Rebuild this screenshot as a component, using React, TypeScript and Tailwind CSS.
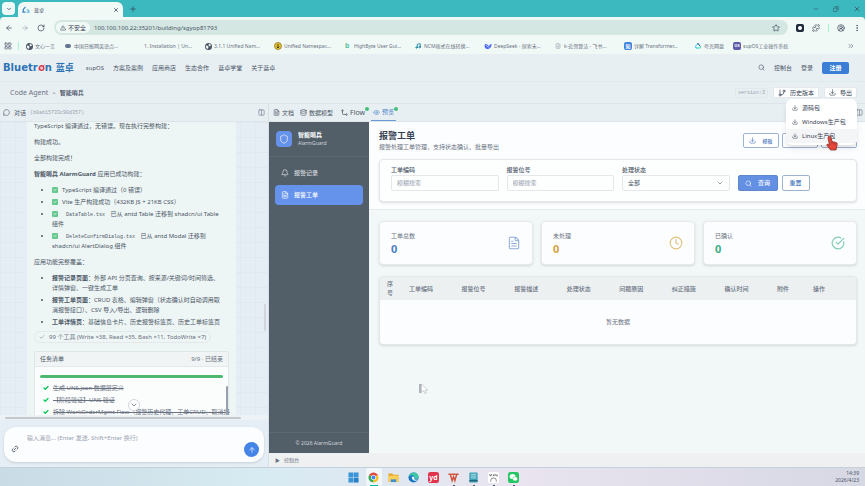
import React from 'react';
import {
  ArrowLeft, ArrowRight, ArrowUp, Bell, Check, ChevronDown, ChevronsRight, CircleCheckBig, CircleUserRound, Clock,
  Columns2, Copy, Database, Download, EllipsisVertical, Eye, FileText, GitBranch, LayoutGrid, Link2,
  MessageCircle, Minus, Music, Plus, Puzzle, RotateCw, Search, Shield, Star, TriangleAlert, X,
} from 'lucide-react';

function GlobeIcon() {
  return (
    <svg className="size-[7px]" viewBox="0 0 14 14">
      <circle cx="7" cy="7" r="7" fill="#4b5563" />
      <path d="M2 5l4 1 1 3-2 3C3 11 1 8 2 5zM8 1l4 3-2 3-3-2z" fill="#f1f9f7" />
    </svg>
  );
}

const bookmarks = [
  { text: '文心一言', icon: <GlobeIcon />, width: 'w-[39px]' },
  { text: '中国日报网英语点...', icon: <span className="h-1 w-1.5 rounded-sm bg-slate-500" />, width: 'w-[70px]' },
  { text: '1. Installation | Un...', icon: <span className="size-1.5" />, width: 'w-[70px]' },
  { text: '3.1.1 Unified Nam...', icon: <GlobeIcon />, width: 'w-[70px]' },
  {
    text: 'Unified Namespac...',
    icon: (
      <svg className="size-2" viewBox="0 0 16 16">
        <circle cx="8" cy="8" r="7" fill="#e8c230" stroke="#8a7420" strokeWidth="1.500" />
        <path d="M8 4v8M5.500 9.500L8 12l2.500-2.500" fill="none" stroke="#4a4020" strokeWidth="2" />
      </svg>
    ),
    width: 'w-[70px]',
  },
  { text: 'HighByte User Gui...', icon: <b className="w-1.5 text-[7px] text-[#5cc3a0]">b</b>, width: 'w-[70px]' },
  { text: 'NCM格式在线转换...', icon: <Music className="size-1.5 text-cyan-700" strokeWidth={3} />, width: 'w-[70px]' },
  {
    text: 'DeepSeek - 探索未...',
    icon: (
      <svg className="size-2" viewBox="0 0 16 16" fill="none">
        <path d="M2 5c2-2 6 0 8 4 1-1 0-3 2-4s2 1 3-2c1 6-3 11-8 11S0 9 2 5z" fill="#4d6bfe" />
        <path d="M4 7c2 0 3 2 5 4" stroke="#fff" strokeWidth="1.4" />
      </svg>
    ),
    width: 'w-[70px]',
  },
  { text: 'k-近邻算法 - 飞书...', icon: <FileText className="size-1.5 text-gray-400" />, width: 'w-[70px]' },
  { text: '详解 Transformer...', icon: <b className="size-2 rounded-xs bg-[#3f82dc] text-center text-white">知</b>, width: 'w-[70px]' },
  {
    text: '夸克网盘',
    icon: (
      <svg className="size-1.5" viewBox="0 0 12 12" fill="none" strokeWidth="2" strokeLinecap="round">
        <path d="M3 10a2.500 2.500 0 0 1 0-5l3-4" stroke="#38bdf8" />
        <path d="M6 1l4 5" stroke="#1e3a8a" />
        <path d="M10 6a2 2 0 0 1-1 4H3" stroke="#2dd4bf" />
      </svg>
    ),
    width: 'w-[39px]',
  },
  { text: 'supOS工业操作系统', icon: <b className="size-2 rounded-xs bg-[#5a58a8] text-center text-[4px] text-white">OS</b>, width: 'w-[70px]' },
];

const navItems = ['supOS', '方案及案例', '应用商店', '生态合作', '蓝卓学堂', '关于蓝卓'];

const tasks = [
  '生成 UNS.json 数据层定义',
  '【阶段验证】UNS 验证',
  '拆除 WorkOrderMgmt Flow（报警历史代理、工单CRUD、取消报',
];

const stats = [
  { label: '工单总数', color: 'text-[#4a80c4]', icon: <FileText className="size-3.5 text-[#8dabd8]" strokeWidth={1.8} /> },
  { label: '未处理', color: 'text-[#d6a140]', icon: <Clock className="size-3.5 text-[#e2c27c]" strokeWidth={2} /> },
  { label: '已确认', color: 'text-[#3dac86]', icon: <CircleCheckBig className="size-3.5 text-[#7fcdb0]" strokeWidth={2} /> },
];

const columns = ['工单编码', '报警位号', '报警描述', '处理状态', '问题原因', '纠正措施', '确认时间', '附件', '操作'];

function BrowserBar() {
  return (
    <div className="shrink-0 bg-[#3bb9be] text-gray-700">
      <div className="flex h-[17px] items-end pl-0.5 pr-1">
        <button aria-label="搜索标签页" className="mb-0.5 flex size-[13px] items-center justify-center rounded bg-[#eefaf7]">
          <ChevronDown className="size-1.5" strokeWidth={3} />
        </button>
        <div className="ml-[3px] flex h-[15px] w-[105px] items-center gap-1 rounded-t-md bg-[#f1f9f7] px-1 text-[5px]">
          <svg className="size-2" viewBox="0 0 16 16" fill="none" strokeWidth="2.500">
            <path d="M7 2C4 4 2 7 2 12h5" stroke="#3b82c4" />
            <path d="M9 12h5c0-4-2-5-5-4" stroke="#67b7dc" />
          </svg>
          <span>蓝卓</span>
          <button aria-label="关闭标签页" className="ml-auto"><X className="size-1.5" strokeWidth={3} /></button>
        </div>
        <button aria-label="新建标签页" className="mb-1 ml-1.5"><Plus className="size-2" /></button>
        <div className="mb-1 ml-auto flex items-center gap-3.5">
          <button aria-label="最小化"><Minus className="size-1.5" /></button>
          <button aria-label="还原"><Copy className="size-1.5 -scale-x-100" /></button>
          <button aria-label="关闭"><X className="size-2" /></button>
        </div>
      </div>

      <div className="flex h-[21px] items-center rounded-t bg-[#f1f9f7] pl-[5px] pr-1">
        <div className="flex w-[49px] items-center gap-2">
          <button aria-label="后退"><ArrowLeft className="size-2" /></button>
          <button aria-label="前进"><ArrowRight className="size-2 text-gray-400" /></button>
          <button aria-label="刷新"><RotateCw className="size-2" /></button>
        </div>
        <div className="flex h-[15px] flex-1 items-center rounded-full bg-[#d4e7e3] pl-0.5 pr-2">
          <span className="flex h-[11px] items-center gap-0.5 rounded-full bg-[#f1f9f7] px-1 text-[6px]">
            <TriangleAlert className="size-1.5" />不安全
          </span>
          <input aria-label="地址" className="ml-1 min-w-0 flex-1 text-[6px] text-gray-600 outline-none" defaultValue="100.100.100.22:35201/building/sgyop81793" />
          <Star className="size-2" />
        </div>
        <div className="ml-2 flex items-center gap-2">
          <span className="flex size-2 items-center justify-center rounded-xs bg-gray-800"><span className="size-1 rounded-full bg-white" /></span>
          <Puzzle className="size-2" />
          <span className="h-2 w-px bg-emerald-200" />
          <CircleUserRound className="size-2" />
          <EllipsisVertical className="size-2" />
        </div>
      </div>

      <div className="flex h-[16px] items-center bg-[#f1f9f7] pl-1 pr-2.5 text-[5px] text-gray-500">
        <LayoutGrid className="size-2" strokeWidth={2.5} />
        <span className="ml-1.5 mr-1.5 h-2 w-px bg-emerald-200" />
        {bookmarks.map((item) => (
          <a key={item.text} href="#" className={`flex items-center gap-0.5 whitespace-nowrap leading-2 ${item.width}`}>
            <span className="flex w-2 shrink-0 justify-center">{item.icon}</span>
            {item.text}
          </a>
        ))}
        <ChevronsRight className="ml-auto size-2" />
      </div>
    </div>
  );
}

function SiteHeader() {
  return (
    <header className="flex h-[28px] shrink-0 items-center border-b border-[#e0e9ee] pl-[3px] pr-4 text-gray-600">
      <a href="#" className="flex items-center font-['DejaVu_Sans','Noto_Sans_CJK_SC',sans-serif] text-[10px] font-bold leading-3 text-[#2e74b5]">
        <span>Bluetr</span>
        <svg className="size-[7px]" viewBox="0 0 14 14" fill="none">
          <circle cx="7" cy="8" r="4.500" stroke="#d83b4a" strokeWidth="3" />
          <path d="M1 12L13 2" stroke="#d83b4a" strokeWidth="2" />
          <path d="M5 9l4-3" stroke="#f1f5f9" strokeWidth="1.500" />
        </svg>
        <span>n</span>
        <span className="ml-1 text-[9px]">蓝卓</span>
      </a>
      <nav className="ml-3 flex gap-[9px]">
        {navItems.map((item) => <a key={item} href="#">{item}</a>)}
      </nav>
      <div className="ml-auto flex items-center gap-[9px]">
        <button aria-label="搜索"><Search className="size-[7px]" /></button>
        <a href="#">控制台</a>
        <a href="#">登录</a>
        <button className="h-3 w-[27px] rounded-xs bg-[#3a7fd5] font-bold text-white">注册</button>
      </div>
    </header>
  );
}

function Breadcrumb() {
  return (
    <div className="flex h-[22px] shrink-0 items-center border-b border-[#dde5ea] pl-[10px] pr-2">
      <a href="#" className="text-[7px] text-gray-500">Code Agent</a>
      <span className="mx-1 text-gray-500">&gt;</span>
      <span className="font-medium text-gray-700">智能哨兵</span>
      <div className="ml-auto flex items-center gap-[5px] text-gray-700">
        <span className="rounded-xs border border-[#e0e8ea] px-0.5 font-['Liberation_Mono',monospace] text-[5px] text-gray-400">version:3</span>
        <button className="flex h-[11px] items-center gap-1 rounded-xs border border-gray-200 bg-white px-1">
          <GitBranch className="size-2" />历史版本
        </button>
        <div className="relative">
          <button className="flex h-[11px] items-center gap-1 rounded-xs border border-gray-200 bg-white px-1">
            <Download className="size-[7px]" />导出
          </button>
          <div className="absolute right-0 top-3 z-20 w-[71px] rounded-md bg-white py-0.5 shadow-md">
            {['源码包', 'Windows生产包', 'Linux生产包'].map((name) => (
              <button key={name} className="flex h-3.5 w-full items-center gap-1 whitespace-nowrap rounded-xs px-1.5 nth-3:bg-[#f4f5f6]">
                <Download className="size-1.5" />{name}
              </button>
            ))}
            <svg className="absolute left-10 top-9 h-[17px] w-3" viewBox="0 0 24 32">
              <path d="M5 2c2-1 4 0 5 2l2 8 8 2c3 1 3 3 2 6l-2 9H9L2 20c-1-3 2-4 4-2l1 1L4 5z" fill="#e5463a" stroke="#7f2d28" strokeWidth="1.500" />
              <path d="M12 13v4M16 14v4M19 15v4" stroke="#8f2d28" />
            </svg>
          </div>
        </div>
      </div>
    </div>
  );
}

function Done() {
  return (
    <span className="mr-1 inline-flex size-1.5 items-center justify-center rounded-[1px] bg-[#63c98d] align-middle">
      <Check className="size-1 text-white" strokeWidth={4} />
    </span>
  );
}

function ChatPanel() {
  return (
    <section className="flex w-[269px] shrink-0 flex-col border-r border-[#d5dfe6]">
      <div className="flex h-[18px] shrink-0 items-center gap-1 border-b border-[#dde5ea] px-[3px] text-gray-600">
        <MessageCircle className="size-[7px]" />
        <span>对话</span>
        <span className="font-['Liberation_Mono',monospace] text-[5px] text-gray-400">(b0ab15733c90d357)</span>
        <button aria-label="折叠面板" className="ml-auto"><Columns2 className="size-[7px] text-gray-500" /></button>
      </div>

      <div className="relative min-h-0 flex-1 overflow-hidden bg-[#e5edf5] bg-[linear-gradient(#e0e8f1_1px,transparent_1px),linear-gradient(90deg,#e0e8f1_1px,transparent_1px)] bg-[size:15px_15px] pl-[27px] pr-8">
        <div className="-mt-px bg-[#eef5f5] px-[7px] leading-[10px] text-gray-600">
          <div className="space-y-1.5">
            <p className="whitespace-nowrap">TypeScript 编译通过，无错误。现在执行完整构建：</p>
            <p>构建成功。</p>
            <p>全部构建完成！</p>
            <p><b>智能哨兵 AlarmGuard</b> 应用已成功构建：</p>
            <ul className="list-disc space-y-0.5 pl-[18px]">
              <li><Done />TypeScript 编译通过（0 错误）</li>
              <li><Done />Vite 生产构建成功（432KB JS + 21KB CSS）</li>
              <li><Done /><code className="mx-1 font-['Liberation_Mono',monospace] text-[5px] leading-none">DataTable.tsx</code> 已从 antd Table 迁移到 shadcn/ui Table<br />组件</li>
              <li><Done /><code className="mx-1 font-['Liberation_Mono',monospace] text-[5px] leading-none">DeleteConfirmDialog.tsx</code> 已从 antd Modal 迁移到<br />shadcn/ui AlertDialog 组件</li>
            </ul>
            <p>应用功能完整覆盖：</p>
            <ul className="list-disc space-y-0.5 pl-[18px]">
              <li><b>报警记录页面</b>：外部 API 分页查询、按来源/关键词/时间筛选、<br />详情弹窗、一键生成工单</li>
              <li><b>报警工单页面</b>：CRUD 表格、编辑弹窗（状态确认时自动调用取<br />消报警接口）、CSV 导入/导出、逻辑删除</li>
              <li><b>工单详情页</b>：基础信息卡片、历史报警标签页、历史工单标签页</li>
            </ul>
          </div>
          <button className="mt-1 flex h-3 items-center gap-1 whitespace-nowrap rounded-full border border-gray-200 px-1 text-gray-500">
            <Check className="size-1.5" />99 个工具 (Write ×38, Read ×35, Bash ×11, TodoWrite ×7)
          </button>
          <div className="mt-2 rounded-xs border border-[#dfe6e8] bg-[#fbfdfd]">
            <div className="flex h-[15px] items-center justify-between border-b border-[#e3e9ea] bg-[#f0f4f4] px-[5px]">
              <span>任务清单</span>
              <span className="text-gray-500">9/9 · 已结束</span>
            </div>
            <div className="mx-[5px] mt-2 h-[3px] rounded-full bg-[#4cb870]" />
            <div className="flex pl-2 pt-1">
              <ul className="min-w-0 flex-1 text-gray-500">
                {tasks.map((task) => (
                  <li key={task} className="flex h-3 items-center gap-1 whitespace-nowrap">
                    <Check className="size-1.5 shrink-0 text-green-500" strokeWidth={5} />
                    <s>{task}</s>
                  </li>
                ))}
              </ul>
              <span className="mt-1 w-0.5 rounded-full bg-gray-400" />
            </div>
          </div>
        </div>
        <span className="absolute bottom-[84px] right-0.5 h-[27px] w-0.5 rounded-full bg-gray-300" />
        <button aria-label="滚动到底部" className="absolute bottom-1 left-32 flex size-3 items-center justify-center rounded-full border border-gray-300 bg-white">
          <ChevronDown className="size-2 text-gray-600" />
        </button>
      </div>

      <div className="flex h-[5px] items-center bg-[#edf2f5] pl-[5px] pr-[27px]">
        <span className="h-0.5 flex-1 rounded-full bg-[#c3c8cb]" />
      </div>

      <div className="bg-[#e5edf5] px-1 pb-[5px] pt-[7px]">
        <div className="flex h-[35px] items-end rounded-xl bg-[#fcfdfe] px-[5px] pb-[5px] shadow-sm">
          <button aria-label="添加链接" className="mb-1 ml-0.5"><Link2 className="size-2 -rotate-45 text-gray-700" /></button>
          <textarea aria-label="消息" placeholder="输入消息... (Enter 发送, Shift+Enter 换行)" className="h-[24px] min-w-0 flex-1 resize-none pl-2 leading-[10px] outline-none placeholder:text-gray-400" />
          <button aria-label="发送" className="flex size-[15px] items-center justify-center rounded-full bg-[#4484e6] text-white">
            <ArrowUp className="size-2" />
          </button>
        </div>
      </div>
    </section>
  );
}

function WorkTabs() {
  return (
    <div className="flex h-[18px] shrink-0 items-stretch border-b border-[#dde5ea] pl-1 pr-0.5 text-gray-600">
      <button className="flex items-center gap-0.5"><FileText className="size-[7px]" />文档</button>
      <button className="ml-1.5 flex items-center gap-0.5"><Database className="size-[7px]" />数据模型</button>
      <button className="relative ml-2 flex items-center gap-0.5 pr-0.5">
        <svg className="size-[7px]" viewBox="0 0 14 14" fill="none" stroke="currentColor" strokeWidth="1.500">
          <path d="M3 4v5q0 2 2 2h4" /><circle cx="3" cy="3" r="1.500" /><circle cx="11" cy="11" r="1.500" />
        </svg>
        <span className="text-[7px]">Flow</span>
        <span className="absolute -right-0.5 top-[3px] size-1 rounded-full bg-[#43c07a]" />
      </button>
      <button className="relative ml-1 flex items-center gap-0.5 border-b border-[#6a9ad6] px-0.5 text-[#4f84c8]">
        <Eye className="size-[7px]" />预览
        <span className="absolute -right-0.5 top-[3px] size-1 rounded-full bg-[#43c07a]" />
      </button>
      <button aria-label="展开面板" className="ml-auto"><Columns2 className="size-[7px] text-gray-500" /></button>
    </div>
  );
}

function Sidebar() {
  return (
    <aside className="flex w-[100px] shrink-0 flex-col bg-[#525e68] text-gray-200">
      <div className="flex h-[35px] items-center gap-1.5 border-b border-[#5d6871] px-[7px]">
        <span className="flex size-4 items-center justify-center rounded bg-[#6593ec]"><Shield className="size-2.5" /></span>
        <div>
          <p className="text-[6px] font-bold leading-2 text-white">智能哨兵</p>
          <p className="text-[5px] leading-2 text-gray-300">AlarmGuard</p>
        </div>
      </div>
      <nav className="flex flex-1 flex-col gap-0.5 p-1.5">
        <a href="#" className="flex h-5 items-center gap-[5px] rounded px-1.5"><Bell className="size-2" />报警记录</a>
        <a href="#" className="flex h-5 items-center gap-[5px] rounded bg-[#6593ec] px-1.5 font-medium text-white"><FileText className="size-2" />报警工单</a>
      </nav>
      <footer className="flex h-[21px] items-center justify-center border-t border-[#5d6871] text-[5px] text-gray-300">© 2026 AlarmGuard</footer>
    </aside>
  );
}

function WorkOrders() {
  return (
    <main className="relative min-w-0 flex-1 bg-[#f2f7f8] text-gray-600">
      <div className="border-b border-[#e8eced] bg-[#fcfdfe] py-[7px] pl-[10px] pr-2">
        <div className="flex items-center justify-between">
          <div>
            <h1 className="text-[9px] font-bold leading-[13px] text-gray-700">报警工单</h1>
            <p className="leading-[10px] text-gray-500">报警处理工单管理，支持状态确认、批量导出</p>
          </div>
          <div className="flex gap-[3px]">
            {['模板', '导入', '导出'].map((name) => (
              <button key={name} className="flex h-[15px] w-9 items-center justify-center gap-1.5 rounded-xs border border-[#9db4cf] bg-white text-[5px] font-medium text-[#4a78c0]">
                <Download className="size-[7px]" />{name}
              </button>
            ))}
          </div>
        </div>
        <form className="mt-[7px] grid grid-cols-4 items-end gap-2 rounded-sm border border-[#e3e7ea] bg-[#fdfefe] px-[11px] pb-[10px] pt-1.5 shadow-sm">
          <label className="font-medium leading-[9px]">
            工单编码
            <input placeholder="模糊搜索" className="block h-4 w-full rounded-xs border border-gray-200 px-[5px] font-normal outline-none placeholder:text-gray-400" />
          </label>
          <label className="font-medium leading-[9px]">
            报警位号
            <input placeholder="模糊搜索" className="block h-4 w-full rounded-xs border border-gray-200 px-[5px] font-normal outline-none placeholder:text-gray-400" />
          </label>
          <label className="font-medium leading-[9px]">
            处理状态
            <span className="relative block">
              <select className="block h-4 w-full appearance-none rounded-xs border border-gray-200 px-[5px] font-normal"><option>全部</option></select>
              <ChevronDown className="pointer-events-none absolute right-1.5 top-1 size-2 text-gray-500" />
            </span>
          </label>
          <div className="flex gap-1">
            <button type="button" className="flex h-4 w-10 items-center justify-center gap-1.5 rounded-xs border border-[#5f88c8] bg-[#6490e4] font-medium text-white">
              <Search className="size-[7px]" />查询
            </button>
            <button type="button" className="h-4 w-7 rounded-xs border border-[#9db4cf] bg-white font-medium text-[#4a78c0]">重置</button>
          </div>
        </form>
      </div>

      <div className="space-y-[11px] py-[11px] pl-[10px] pr-2">
        <div className="grid grid-cols-3 gap-2">
          {stats.map((item) => (
            <div key={item.label} className="flex h-11 items-center justify-between rounded-sm border border-[#e6eaec] bg-[#fcfdfe] px-[11px] shadow-sm">
              <div>
                <p className="leading-[10px] text-gray-500">{item.label}</p>
                <p className={`pt-0.5 text-[11px] font-bold leading-3 ${item.color}`}>0</p>
              </div>
              {item.icon}
            </div>
          ))}
        </div>
        <div className="overflow-hidden rounded-sm border border-[#e2e7e9] bg-[#fcfdfe] shadow-sm">
          <table className="w-full table-fixed text-left">
            <thead className="bg-[#ecf0f1] text-gray-500">
              <tr className="h-[23px]">
                <th className="w-[22px] px-[7px] font-medium leading-[9px]">序号</th>
                {columns.map((name) => (
                  <th key={name} className={`whitespace-nowrap px-[7px] font-medium ${name === '附件' ? 'w-9' : name === '操作' ? 'w-[50px]' : ''}`}>{name}</th>
                ))}
              </tr>
            </thead>
            <tbody>
              <tr className="h-11"><td colSpan={10} className="text-center text-gray-500">暂无数据</td></tr>
            </tbody>
          </table>
        </div>
      </div>

      <svg className="absolute left-[50px] top-[261px] h-3 w-[9px]" viewBox="0 0 18 24">
        <path d="M5 2v17l4-4 3 6 3-1-3-6h5z" fill="#fff" stroke="#9ca3af" />
        <path d="M2 2v18" stroke="#6b7280" strokeWidth="2" />
      </svg>
    </main>
  );
}

const apps = [
  {
    name: '开始',
    icon: <g fill="#3a94d6"><path d="M1 1h10.500v10.500H1zM12.500 1H23v10.500H12.500zM1 12.500h10.500V23H1z" /><path d="M12.500 12.500H23V23H12.500z" fill="#2a80c6" /></g>,
  },
  {
    name: 'Chrome',
    icon: (
      <g>
        <path d="M12 12L2.500 6.500a11 11 0 0 1 19 0z" fill="#e5483c" />
        <path d="M12 12L2.500 6.500a11 11 0 0 0 9.500 16.500z" fill="#35a853" />
        <path d="M12 12h0l9.500-5.500A11 11 0 0 1 12 23z" fill="#fbc116" />
        <circle cx="12" cy="12" r="5.500" fill="#fff" /><circle cx="12" cy="12" r="4.200" fill="#4285f4" />
      </g>
    ),
  },
  {
    name: '文件资源管理器',
    icon: <g><path d="M1 3h8l3 3h11v16H1z" fill="#e5a52c" /><path d="M1 8h22v14H1z" fill="#fbd05b" /><path d="M6 16h12v6H6z" fill="#3f8fd2" /></g>,
  },
  {
    name: 'Edge',
    icon: <g><circle cx="12" cy="12" r="11" fill="#1976c5" /><path d="M1 12C2 4 8 1 13 1c7 0 11 6 10 10-1 5-7 6-9 4 2-4-1-8-5-8-4 0-7 2-8 5z" fill="#41c6a7" /><path d="M8 12c1-3 5-3 6 0 0 2-1 3 0 4 2 2 6 1 8-1-3 6-12 6-14-3z" fill="#e8f5fb" /></g>,
  },
  {
    name: '有道',
    icon: <g><rect width="24" height="24" rx="5" fill="#e0334c" /><text x="12" y="17" textAnchor="middle" fontSize="15" fontWeight="700" fill="#fff">yd</text></g>,
  },
  {
    name: 'WPS',
    icon: <path d="M1 5h4l4 14 3-9 3 9 4-14h4M7 5h10" fill="none" stroke="#cf4f3a" strokeWidth="3" />,
  },
  {
    name: '记事本',
    icon: <g><rect x="3" y="1" width="18" height="22" rx="2" fill="#3a9fb4" /><path d="M6 5h12M6 9h12M6 13h12" stroke="#b8e4ea" strokeWidth="2" /><path d="M3 19h18" stroke="#24647a" strokeWidth="3" /></g>,
  },
  {
    name: '终端',
    icon: <g><rect width="24" height="24" rx="3" fill="#fff" /><path d="M3 5l2 4 2-4 2 4M12 5v4M15 9V5l5 4V5M6 21v-3q0-5 6-5t6 5v3" fill="none" stroke="#555" strokeWidth="1.500" /></g>,
  },
  {
    name: '微信',
    icon: <g><rect width="24" height="24" rx="5" fill="#25c563" /><ellipse cx="10" cy="10" rx="6.500" ry="5.500" fill="#fff" /><ellipse cx="15.500" cy="15" rx="5.500" ry="4.500" fill="#fff" stroke="#25c563" /></g>,
  },
];

function Taskbar() {
  return (
    <div className="grid h-[19px] shrink-0 grid-cols-[1fr_auto_1fr] items-center border-t border-[#c6d0d8] bg-[linear-gradient(90deg,#c9dbe4,#d7ebf3_30%,#e9e4ef_60%,#d6d8e4)] pl-2 pr-1.5">
      <span />
      <div className="flex gap-1">
        {apps.map((app, index) => (
          <button key={app.name} aria-label={app.name} className={`relative flex h-[18px] w-4 items-center justify-center rounded-xs ${index === 1 ? 'bg-white/60' : ''}`}>
            <svg className="size-[11px]" viewBox="0 0 24 24">{app.icon}</svg>
            {index === 1 && <span className="absolute bottom-0 h-px w-2 bg-teal-500" />}
            {index > 4 && <span className="absolute bottom-0 h-px w-0.5 bg-gray-600" />}
          </button>
        ))}
      </div>
      <div className="text-right text-[5px] leading-[7px] text-gray-600">
        <p>14:39</p>
        <p>2026/4/23</p>
      </div>
    </div>
  );
}

function App() {
  return (
    <div className="flex h-screen flex-col overflow-hidden bg-[#e8eff3] font-['Noto_Sans','Noto_Sans_CJK_SC',sans-serif] text-[6px] leading-2">
      <BrowserBar />
      <SiteHeader />
      <Breadcrumb />
      <div className="flex min-h-0 flex-1">
        <ChatPanel />
        <section className="flex min-w-0 flex-1 flex-col">
          <WorkTabs />
          <div className="flex min-h-0 flex-1">
            <Sidebar />
            <WorkOrders />
          </div>
          <button className="flex h-3.5 shrink-0 items-center gap-1 bg-[#eef0f1] px-1.5 text-[5px] text-gray-500">
            <span>▶</span>控制台
          </button>
        </section>
      </div>
      <Taskbar />
    </div>
  );
}

export default App;
